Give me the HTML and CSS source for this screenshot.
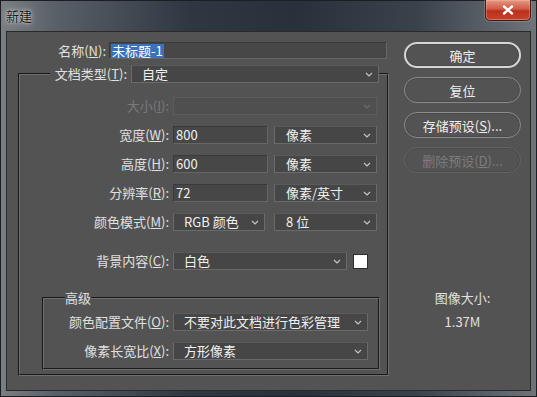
FILE: index.html
```html
<!doctype html>
<html lang="zh-CN">
  <head>
    <meta charset="UTF-8" />
    <title>新建</title>
    <link rel="stylesheet" href="styles.css">
  </head>
  <body>
    <div class="window">
      <div class="titlebar">
        <span class="title">新建</span>
        <div class="close">
          <svg width="12" height="10" viewBox="0 0 12 10"><path d="M2 1.5l8 7M10 1.5l-8 7" stroke="#fff" stroke-width="2.4" stroke-linecap="round"/></svg>
        </div>
      </div>

      <div class="client">
        <div class="form">
          <div class="row name-row">
            <label class="lbl lbl-name">名称(<u>N</u>):</label>
            <div class="field name-field"><span class="sel">未标题-1</span></div>
          </div>

          <fieldset class="group preset">
            <legend>
              <div class="row">
                <label class="lbl lbl-type">文档类型(<u>T</u>):</label>
                <div class="select w-type">自定<svg class="chev" width="8" height="5" viewBox="0 0 8 5"><path d="M1 1l3 3 3-3"/></svg></div>
              </div>
            </legend>

            <div class="rows">
              <div class="row">
                <label class="lbl lbl-main disabled">大小(<u>I</u>):</label>
                <div class="select off w-full"><svg class="chev" width="8" height="5" viewBox="0 0 8 5"><path d="M1 1l3 3 3-3"/></svg></div>
              </div>
              <div class="row">
                <label class="lbl lbl-main">宽度(<u>W</u>):</label>
                <div class="field w-num">800</div>
                <div class="select w-unit">像素<svg class="chev" width="8" height="5" viewBox="0 0 8 5"><path d="M1 1l3 3 3-3"/></svg></div>
              </div>
              <div class="row">
                <label class="lbl lbl-main">高度(<u>H</u>):</label>
                <div class="field w-num">600</div>
                <div class="select w-unit">像素<svg class="chev" width="8" height="5" viewBox="0 0 8 5"><path d="M1 1l3 3 3-3"/></svg></div>
              </div>
              <div class="row">
                <label class="lbl lbl-main">分辨率(<u>R</u>):</label>
                <div class="field w-num">72</div>
                <div class="select w-unit">像素/英寸<svg class="chev" width="8" height="5" viewBox="0 0 8 5"><path d="M1 1l3 3 3-3"/></svg></div>
              </div>
              <div class="row">
                <label class="lbl lbl-main">颜色模式(<u>M</u>):</label>
                <div class="select w-mode">RGB 颜色<svg class="chev" width="8" height="5" viewBox="0 0 8 5"><path d="M1 1l3 3 3-3"/></svg></div>
                <div class="select w-unit">8 位<svg class="chev" width="8" height="5" viewBox="0 0 8 5"><path d="M1 1l3 3 3-3"/></svg></div>
              </div>
              <div class="row bg-row">
                <label class="lbl lbl-main">背景内容(<u>C</u>):</label>
                <div class="select w-bg">白色<svg class="chev" width="8" height="5" viewBox="0 0 8 5"><path d="M1 1l3 3 3-3"/></svg></div>
                <div class="swatch"></div>
              </div>
            </div>

            <fieldset class="group advanced">
              <legend class="adv-title">高级</legend>
              <div class="rows">
                <div class="row">
                  <label class="lbl lbl-adv">颜色配置文件(<u>O</u>):</label>
                  <div class="select w-adv">不要对此文档进行色彩管理<svg class="chev" width="8" height="5" viewBox="0 0 8 5"><path d="M1 1l3 3 3-3"/></svg></div>
                </div>
                <div class="row">
                  <label class="lbl lbl-adv">像素长宽比(<u>X</u>):</label>
                  <div class="select w-adv">方形像素<svg class="chev" width="8" height="5" viewBox="0 0 8 5"><path d="M1 1l3 3 3-3"/></svg></div>
                </div>
              </div>
            </fieldset>
          </fieldset>
        </div>

        <div class="side">
          <button class="btn btn-default">确定</button>
          <button class="btn">复位</button>
          <button class="btn">存储预设(<u>S</u>)...</button>
          <button class="btn" disabled>删除预设(<u>D</u>)...</button>

          <div class="size-info">
            <div>图像大小:</div>
            <div class="size-value">1.37M</div>
          </div>
        </div>
      </div>
    </div>
  </body>
</html>
```

FILE: styles.css
```css
* {
  margin: 0;
  padding: 0;
  box-sizing: border-box;
}

html,
body {
  width: 537px;
  height: 397px;
  overflow: hidden;
}

body {
  font-family: "Noto Sans CJK SC", "Liberation Sans", sans-serif;
  font-size: 13px;
  background: #1d2128;
}

.window {
  width: 537px;
  height: 397px;
  display: flex;
  flex-direction: column;
  border: 1px solid #1b1e23;
  background: linear-gradient(90deg, #7a7f84 0%, #5a6068 10%, #2f3742 35%, #28303b 55%, #3a424c 78%, #6f747a 100%);
}

/* title bar */
.titlebar {
  height: 30px;
  display: flex;
  align-items: flex-start;
  justify-content: space-between;
}

.title {
  margin: 7px 0 0 5px;
  line-height: 16px;
  color: #1a1a1a;
  text-shadow: 0 0 6px rgba(230, 230, 230, 0.9), 0 0 2px rgba(255, 255, 255, 0.8);
}

.close {
  width: 46px;
  height: 21px;
  margin: -1px 5px 0 0;
  display: flex;
  align-items: center;
  justify-content: center;
  border: 1px solid #4a1a12;
  border-top: none;
  border-radius: 0 0 5px 5px;
  background: linear-gradient(#e49a86 0%, #d05a44 45%, #b8301c 55%, #c7432c 100%);
  box-shadow: inset 0 0 0 1px rgba(255, 200, 190, 0.35), 0 0 0 1px rgba(200, 200, 200, 0.25);
}

/* dialog body */
.client {
  flex: 1;
  margin: 0 5px 5px;
  border: 1px solid #2a2a2a;
  background: #535353;
  display: flex;
  padding-top: 10px;
  color: #e2e2e2;
}

.form {
  width: 385px;
}

.row {
  display: flex;
  align-items: center;
  height: 18px;
  gap: 4px;
}

.lbl {
  text-align: right;
  white-space: nowrap;
  line-height: 18px;
  color: #e0e0e0;
}

.lbl.disabled {
  color: #7a7a7a;
}

.lbl-name { width: 99px; }
.lbl-type { width: 77px; }
.lbl-main { width: 149px; }
.lbl-adv { width: 125px; }

.name-row {
  height: 17px;
  gap: 3px;
}

.field,
.select {
  height: 18px;
  line-height: 16px;
  border: 1px solid #3a3a3a;
  border-right-color: #666;
  border-bottom-color: #666;
  background: #474747;
  color: #f0f0f0;
  white-space: nowrap;
  display: flex;
  align-items: center;
}

.field {
  padding-left: 2px;
}

.select {
  padding: 0 5px 0 10px;
  border: 1px solid #6a6a6a;
  border-top-color: #5a5a5a;
  background: #464646;
}

.select.off {
  background: #4f4f4f;
  border-color: #5c5c5c;
}

.chev {
  margin-left: auto;
  fill: none;
  stroke: #c4c4c4;
  stroke-width: 1.2;
}

.off .chev {
  stroke: #6c6c6c;
}

.name-field {
  width: 278px;
  height: 17px;
  padding-left: 1px;
}

.sel {
  background: #3a72c0;
  color: #fff;
  line-height: 14px;
  padding: 0 1px;
}

.w-type { width: 248px; }
.w-full { width: 204px; }
.w-num { width: 95px; margin-right: 2px; }
.w-unit { width: 103px; padding-left: 11px; }
.w-mode { width: 92px; margin-right: 5px; }
.w-bg { width: 174px; margin-right: 2px; }
.w-adv { width: 195px; }

.swatch {
  width: 15px;
  height: 15px;
  background: #fff;
  border: 1px solid #2e2e2e;
}

/* groups */
.group {
  border: 2px groove #6e6e6e;
  min-width: 0;
}

.preset {
  width: 371px;
  margin: 6px 0 0 11px;
  padding: 0;
}

.preset > legend {
  margin-left: 30px;
  padding: 0;
}

.rows {
  display: flex;
  flex-direction: column;
  gap: 11px;
}

.preset > .rows {
  padding-top: 14px;
}

.bg-row {
  margin-top: 10px;
}

.advanced {
  margin: 20px 7px 4px 22px;
  padding: 8px 0 8px;
}

.adv-title {
  margin-left: 21px;
  padding: 0;
  line-height: 15px;
  color: #e0e0e0;
}

/* buttons */
.side {
  width: 117px;
  margin-left: 12px;
  display: flex;
  flex-direction: column;
  gap: 9px;
}

.btn {
  height: 26px;
  border: 1px solid #8a8a8a;
  border-radius: 13px;
  background: #535353;
  color: #eeeeee;
  font-family: inherit;
  font-size: 13px;
  box-shadow: inset 0 0 0 1px #4a4a4a;
}

.btn-default {
  border: 2px solid #d6d6d6;
}

.btn:disabled {
  border-color: #626262;
  color: #7c7c7c;
}

.size-info {
  margin-top: 108px;
  text-align: center;
  line-height: 16px;
  color: #e0e0e0;
}

.size-value {
  margin-top: 8px;
}
```
